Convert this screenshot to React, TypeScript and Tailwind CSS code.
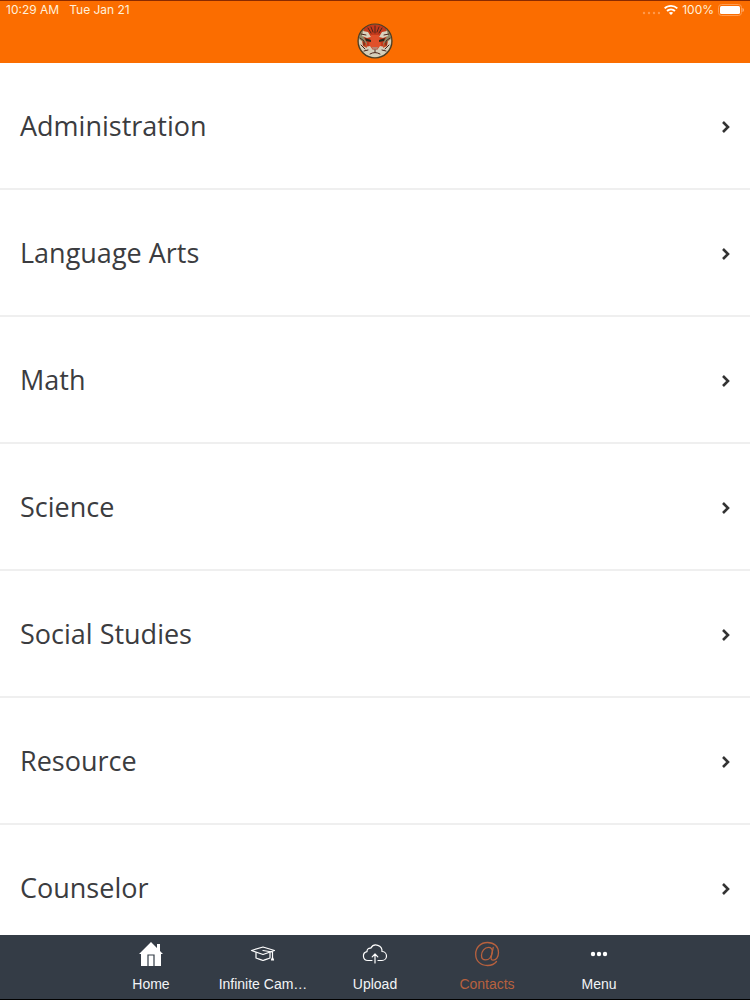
import type { ReactNode } from "react";

const departments = [
  "Administration",
  "Language Arts",
  "Math",
  "Science",
  "Social Studies",
  "Resource",
  "Counselor",
];

function TigerLogo() {
  return (
    <svg viewBox="0 0 36 36" className="h-9 w-9" role="img" aria-label="Tiger">
      <circle cx="18" cy="18" r="17" fill="#8f8a68" />
      {/* forehead, nose bridge and muzzle */}
      <path d="M7 5C13 0 23 0 29 5l1 8-4 7 1 7-4 3H13l-4-3 1-7-4-7z" fill="#c43a1c" />
      <path d="M14 12h8l2 10-3 3h-6l-3-3z" fill="#e0502a" />
      <path d="M15 24h6l-1 3h-4z" fill="#b58370" />
      {/* white brows, cheeks and chin */}
      <path d="M6 8l5 1 3 5-4 1-5-2zM30 8l-5 1-3 5 4 1 5-2z" fill="#d9d3bd" />
      <path d="M2 16l4 3 2 5 5-1 3 4h4l3-4 5 1 2-5 4-3c1 8-5 18-16 18S1 24 2 16z" fill="#d5cfbb" />
      <path d="M5 18l4 2 1 5-4-2zM31 18l-4 2-1 5 4-2z" fill="#c8451f" />
      {/* eyes */}
      <path d="M8 15l6 2v2l-5-1zM28 15l-6 2v2l5-1z" fill="#2b2a1c" />
      {/* stripes */}
      <g fill="none" stroke="#4a241a" strokeWidth="1" strokeLinecap="round">
        <path d="M18 3v7M14 4l2 5M22 4l-2 5M11 5l3 5M25 5l-3 5" />
        <path d="M4 11l5 1M32 11l-5 1M3 15l4 3v4M33 15l-4 3v4M4 22l4 4M32 22l-4 4M7 28l4-1M29 28l-4-1" />
        <path d="M18 27v2M13 31q5-3 10 0" />
      </g>
      <circle cx="18" cy="18" r="17" fill="none" stroke="#4b3d25" strokeWidth="1.2" />
    </svg>
  );
}

function WifiIcon() {
  return (
    <svg viewBox="0 0 14 10" className="h-[10px] w-[14px]" fill="#fff" aria-hidden="true">
      <path d="M7 0C4.3 0 1.900 1 0 2.700l1.300 1.400a8.400 8.400 0 0 1 11.400 0L14 2.700A10.400 10.400 0 0 0 7 0z" />
      <path d="M7 3.500c-1.800 0-3.400.7-4.600 1.800l1.300 1.400a4.900 4.900 0 0 1 6.600 0l1.300-1.400A6.800 6.800 0 0 0 7 3.500z" />
      <path d="M7 7c-.9 0-1.600.3-2.200.8L7 10l2.200-2.200C8.600 7.300 7.900 7 7 7z" />
    </svg>
  );
}

function BatteryIcon() {
  return (
    <svg viewBox="0 0 26 12" className="h-3 w-[26px]" aria-hidden="true">
      <rect x=".5" y=".5" width="23" height="11" rx="3" fill="none" stroke="#ff9d52" />
      <rect x="2" y="2" width="20" height="8" rx="1.5" fill="#fff" />
      <path d="M24.500 4v4c1-.4 1.300-1 1.300-2s-.3-1.600-1.300-2z" fill="#ffb780" />
    </svg>
  );
}

function HomeIcon() {
  return (
    <svg viewBox="0 0 26 26" className="h-[26px] w-[26px]" aria-hidden="true">
      <path d="M13 1L1 13h2v12h20V13h2l-3-3V3h-3v4z" fill="#fff" />
      <path d="M10 25V14h6v11" fill="none" stroke="#333c46" strokeWidth="1.2" />
    </svg>
  );
}

function GraduationIcon() {
  return (
    <svg viewBox="0 0 26 26" className="h-[26px] w-[26px]" fill="none" stroke="#fff" strokeWidth="1.2" strokeLinejoin="round" strokeLinecap="round" aria-hidden="true">
      <path d="M1.500 9.500L13 6l11.500 3.500L13 13.500z" />
      <path d="M6 11.500V17c2 1 4 1.200 7 2.500 3-1.300 5-1.500 7-2.500v-5.500" />
      <path d="M13 9.500l9.500 1.500v7M22.500 16.500l-1 2.500h2z" />
    </svg>
  );
}

function UploadIcon() {
  return (
    <svg viewBox="0 0 26 26" className="h-[26px] w-[26px]" fill="none" stroke="#fff" strokeWidth="1.2" strokeLinejoin="round" strokeLinecap="round" aria-hidden="true">
      <path d="M10 19.500H6a4.500 4.500 0 0 1-1-8.900 3.200 3.200 0 0 1 3.800-3.500A6 6 0 0 1 20 10.500a4.500 4.500 0 0 1 0 9h-4" />
      <path d="M13 22V13M10.200 15.800L13 13l2.800 2.800" />
    </svg>
  );
}

function AtIcon() {
  return (
    <svg viewBox="0 0 26 26" className="h-[26px] w-[26px]" fill="none" stroke="#b8613e" strokeWidth="1.3" strokeLinecap="round" strokeLinejoin="round" aria-hidden="true">
      <path d="M22.500 20.500c-2 2.600-5 4-9 4C6.500 24.500 1.700 20 1.700 13.200S6.700 1.500 13.500 1.500 24.500 5.600 24.500 11.500c0 4.700-2.500 7.700-5.300 7.700-1.900 0-2.400-1.400-2-3.200L19.200 6.500" />
      <path d="M18.400 11c.1-2.800-1.300-4.600-3.900-4.600-4 0-7 4-7 8 0 2.700 1.500 4.500 4.100 4.500 3.200 0 5.900-3.200 6.800-7.900z" />
    </svg>
  );
}

function DotsIcon() {
  return (
    <svg viewBox="0 0 26 26" className="h-[26px] w-[26px]" fill="#fff" aria-hidden="true">
      <circle cx="7" cy="13" r="2.2" />
      <circle cx="13" cy="13" r="2.2" />
      <circle cx="19" cy="13" r="2.2" />
    </svg>
  );
}

const tabs: { label: string; icon: ReactNode; active?: boolean }[] = [
  { label: "Home", icon: <HomeIcon /> },
  { label: "Infinite Cam…", icon: <GraduationIcon /> },
  { label: "Upload", icon: <UploadIcon /> },
  { label: "Contacts", icon: <AtIcon />, active: true },
  { label: "Menu", icon: <DotsIcon /> },
];

export default function App() {
  return (
    <div className="flex h-screen flex-col bg-white">
      <header className="border-t border-[#8a2a00] bg-[#fb6d00]">
        <div className="flex h-[18px] items-center justify-between px-[6px] font-[Inter,sans-serif] text-[12px] text-[#fff0dc]">
          <div className="flex gap-[10px]">
            <span>10:29 AM</span>
            <span>Tue Jan 21</span>
          </div>
          <div className="flex items-center gap-1">
            <svg viewBox="0 0 18 10" className="h-[10px] w-[18px]" fill="#ff9a4d" aria-hidden="true">
              <circle cx="2" cy="8" r="1.2" />
              <circle cx="7" cy="8" r="1.2" />
              <circle cx="12" cy="8" r="1.2" />
              <circle cx="17" cy="8" r="1.2" />
            </svg>
            <WifiIcon />
            <span>100%</span>
            <BatteryIcon />
          </div>
        </div>
        <div className="flex h-11 justify-center pt-1">
          <TigerLogo />
        </div>
      </header>

      <main className="min-h-0 flex-1 overflow-hidden">
        <ul>
          {departments.map((name) => (
            <li key={name} className="border-b-2 border-[#efefef]">
              <a
                href="#"
                className="flex h-[125px] items-center justify-between pt-[2px] pr-[19px] pl-5 font-['Open_Sans',sans-serif] text-[27px] text-[#3b3c40]"
              >
                {name}
                <svg viewBox="0 0 10 14" className="h-[14px] w-[10px]" fill="none" stroke="#333" strokeWidth="2.6" aria-hidden="true">
                  <path d="M2 2l5 5-5 5" />
                </svg>
              </a>
            </li>
          ))}
        </ul>
      </main>

      <nav className="flex justify-center border-b border-black bg-[#343c46]">
        {tabs.map((tab) => (
          <a
            key={tab.label}
            href="#"
            aria-current={tab.active ? "page" : undefined}
            className={`flex h-16 w-28 flex-col items-center gap-2 pt-[6px] font-['Liberation_Sans',sans-serif] text-[14px] leading-[18px] ${
              tab.active ? "text-[#b8613e]" : "text-[#f2f4f6]"
            }`}
          >
            {tab.icon}
            {tab.label}
          </a>
        ))}
      </nav>
    </div>
  );
}
